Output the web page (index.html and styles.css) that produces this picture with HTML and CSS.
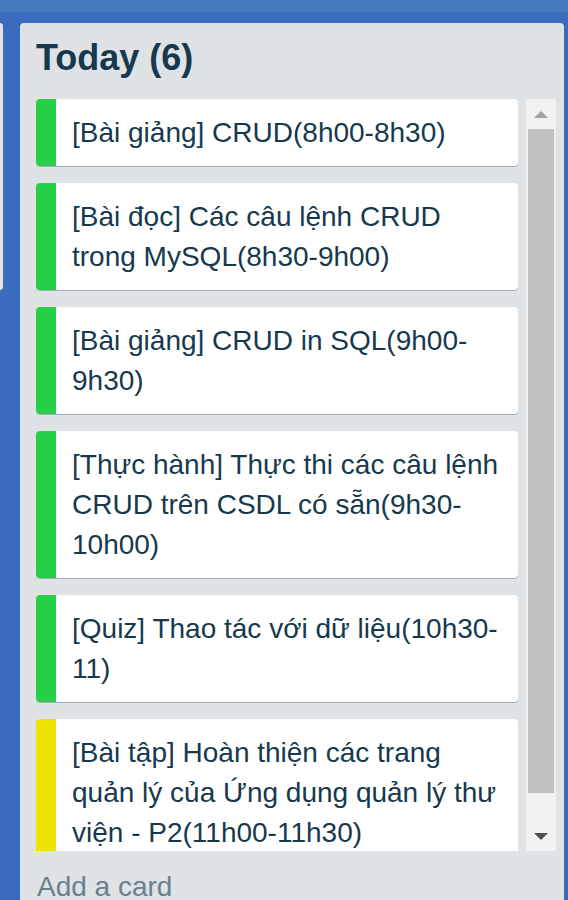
FILE: index.html
```html
<!DOCTYPE html>
<html lang="vi">
<head>
<meta charset="utf-8">
<title>Today</title>
<link rel="stylesheet" href="styles.css">
</head>
<body>
<div class="topbar"></div>
<div class="board">
  <div class="prev-list"></div>
  <section class="list">
    <h2 class="list-title">Today (6)</h2>
    <div class="list-body">
      <div class="cards">
        <div class="card"><span class="label green"></span><div class="card-text">[Bài giảng] CRUD(8h00-8h30)</div></div>
        <div class="card"><span class="label green"></span><div class="card-text">[Bài đọc] Các câu lệnh CRUD trong MySQL(8h30-9h00)</div></div>
        <div class="card"><span class="label green"></span><div class="card-text">[Bài giảng] CRUD in SQL(9h00-9h30)</div></div>
        <div class="card"><span class="label green"></span><div class="card-text">[Thực hành] Thực thi các câu lệnh CRUD trên CSDL có sẵn(9h30-10h00)</div></div>
        <div class="card"><span class="label green"></span><div class="card-text">[Quiz] Thao tác với dữ liệu(10h30-11)</div></div>
        <div class="card"><span class="label yellow"></span><div class="card-text">[Bài tập] Hoàn thiện các trang quản lý của Ứng dụng quản lý thư viện - P2(11h00-11h30)</div></div>
      </div>
      <div class="scrollbar">
        <div class="sb-btn"><svg width="14" height="7" viewBox="0 0 14 7"><polygon points="0,7 7,0 14,7" fill="#a3a3a3"/></svg></div>
        <div class="sb-thumb"></div>
        <div class="sb-rest"></div>
        <div class="sb-btn"><svg width="14" height="7" viewBox="0 0 14 7"><polygon points="0,0 14,0 7,7" fill="#505050"/></svg></div>
      </div>
    </div>
    <div class="add-card">Add a card</div>
  </section>
</div>
</body>
</html>
```
FILE: styles.css
```css
html, body {
  margin: 0;
  padding: 0;
}
body {
  background: #3a6bbf;
  font-family: "Liberation Sans", Arial, sans-serif;
  height: 900px;
  overflow: hidden;
}
.topbar {
  height: 12px;
  background: #447bbd;
}
.board {
  display: flex;
  gap: 17px;
  padding-top: 11px;
  height: 877px;
}
.prev-list {
  width: 3px;
  height: 267px;
  background: #dfe3e6;
  border-radius: 0 4px 4px 0;
  flex-shrink: 0;
}
.list {
  width: 544px;
  flex-shrink: 0;
  background: #dfe3e6;
  border-radius: 4px 4px 0 0;
  padding: 15px 8px 0 16px;
  box-sizing: border-box;
  overflow: hidden;
}
.list-title {
  margin: 0 0 21px 0;
  font-size: 36px;
  line-height: 40px;
  font-weight: bold;
  color: #17394d;
}
.list-body {
  display: flex;
  height: 752px;
}
.cards {
  width: 482px;
  flex-shrink: 0;
  overflow: hidden;
  display: flex;
  flex-direction: column;
  gap: 17px;
}
.card {
  display: flex;
  flex-shrink: 0;
  background: #fff;
  border-radius: 4px;
  box-shadow: 0 1px 0 #a3adb6;
  overflow: hidden;
}
.label {
  width: 20px;
  flex-shrink: 0;
}
.label.green { background: #26cf47; }
.label.yellow { background: #ece300; }
.card-text {
  padding: 14px 16px 13px 16px;
  font-size: 28px;
  line-height: 40px;
  color: #17394d;
}
.scrollbar {
  margin-left: 8px;
  width: 30px;
  flex-shrink: 0;
  background: #f1f1f1;
  display: flex;
  flex-direction: column;
  border-radius: 2px 2px 0 0;
}
.sb-btn {
  height: 30px;
  display: flex;
  align-items: center;
  justify-content: center;
  flex-shrink: 0;
}
.sb-thumb {
  height: 664px;
  margin: 0 2px;
  background: #c1c1c1;
}
.sb-rest {
  flex: 1;
}
.add-card {
  margin-top: 16px;
  font-size: 28px;
  line-height: 40px;
  color: #6b808c;
  padding-left: 1px;
}
```
